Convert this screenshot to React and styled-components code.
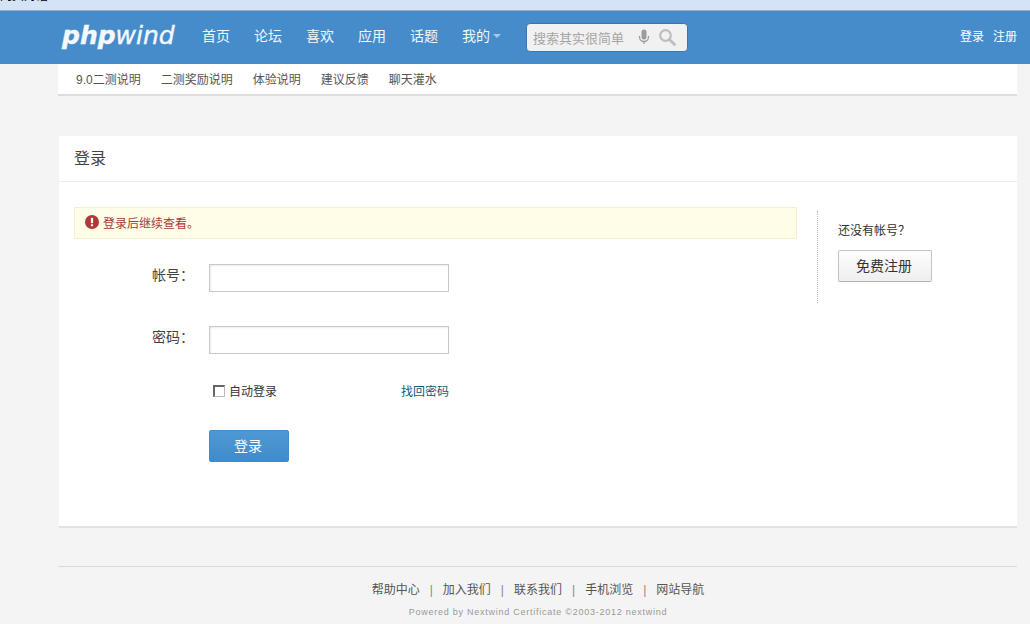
import React from "react"
import styled, { createGlobalStyle } from "styled-components"

const GlobalStyle = createGlobalStyle`
	html, body {
		margin: 0;
		padding: 0;
		background: #f4f4f4;
		font-family: "Liberation Sans", "Noto Sans CJK SC", sans-serif;
		font-size: 12px;
		color: #333;
	}
	* {
		box-sizing: border-box;
	}
`;

const Page = styled("div")`
	width: 1030px;
	height: 624px;
	overflow: hidden;
`;
const TopStrip = styled("div")`
	height: 11px;
	background: #d5e3f6;
	border-bottom: 1px solid #8fb0d3;
	overflow: hidden;
`;
const TopStripText = styled("div")`
	font-size: 12px;
	line-height: 12px;
	margin-top: -10px;
	color: #000;
`;
const Header = styled("header")`
	height: 53px;
	background: #468ccb;
	display: flex;
	align-items: center;
	padding: 0 13px 0 62px;
`;
const Logo = styled("div")`
	width: 140px;
	padding-bottom: 4px;
	font-family: "DejaVu Sans", sans-serif;
	font-size: 25px;
	font-style: italic;
	white-space: nowrap;
	color: #f4f8fc;
	-webkit-text-stroke: 0.4px #f4f8fc;
`;
const LogoStrong = styled("span")`
	font-weight: 700;
`;
const MainNav = styled("nav")`
	display: flex;
	gap: 24px;
	padding-bottom: 6px;
`;
const NavItem = styled("a")`
	display: flex;
	align-items: center;
	gap: 3px;
	font-size: 14px;
	color: #f2f7fb;
`;
const Caret = styled("span")`
	width: 0;
	height: 0;
	margin-top: 2px;
	border-left: 4px solid transparent;
	border-right: 4px solid transparent;
	border-top: 4px solid #a9cae6;
`;
const SearchBox = styled("div")`
	width: 162px;
	height: 29px;
	margin: 0 0 1px 25px;
	display: flex;
	align-items: center;
	padding: 0 11px 0 6px;
	background: #f1f1f1;
	border: 1px solid #3a76ac;
	border-radius: 4px;
`;
const SearchHint = styled("span")`
	flex: 1;
	font-size: 13px;
	color: #a5a5a5;
	white-space: nowrap;
`;
const SearchIcons = styled("div")`
	display: flex;
	align-items: center;
	gap: 8px;
	color: #bdbdbd;
`;
const UserNav = styled("div")`
	margin-left: auto;
	padding-bottom: 4px;
	display: flex;
	gap: 9px;
`;
const UserLink = styled("a")`
	font-size: 12px;
	color: #fff;
`;
const Container = styled("div")`
	width: 959px;
	margin-left: 58px;
`;
const SubNav = styled("div")`
	height: 32px;
	background: #fff;
	border-bottom: 2px solid #dedede;
	display: flex;
	align-items: center;
	gap: 20px;
	padding: 0 18px 2px;
`;
const SubNavItem = styled("a")`
	font-size: 12px;
	color: #555;
`;
const Panel = styled("section")`
	height: 392px;
	margin: 40px 0 0 1px;
	background: #fff;
	border-bottom: 2px solid #e2e2e2;
`;
const PanelTitle = styled("h2")`
	height: 46px;
	margin: 0;
	padding: 0 15px 4px;
	display: flex;
	align-items: center;
	border-bottom: 1px solid #ececec;
	font-size: 16px;
	font-weight: 400;
	color: #444;
`;
const PanelBody = styled("div")`
	display: flex;
	padding: 25px 0 0 15px;
`;
const LoginColumn = styled("div")`
	width: 723px;
`;
const Notice = styled("div")`
	height: 32px;
	display: flex;
	align-items: center;
	gap: 4px;
	padding: 0 0 2px 10px;
	background: #fffde8;
	border: 1px solid #f5eed2;
	font-size: 12px;
	color: #a93a3a;
`;
const Field = styled("div")`
	display: flex;
	align-items: flex-start;
	margin-top: ${(props) => props.$top}px;
`;
const FieldLabel = styled("label")`
	width: 135px;
	padding-right: 15px;
	text-align: right;
	font-size: 14px;
	line-height: 22px;
	color: #444;
`;
const TextInput = styled("input")`
	width: 240px;
	height: 28px;
	padding: 0 6px;
	background: #fff;
	border: 1px solid #c8c8c8;
	box-shadow: inset 1px 1px 2px rgba(0, 0, 0, 0.08);
	outline: none;
`;
const OptionsRow = styled("div")`
	width: 240px;
	margin: 28px 0 0 135px;
	display: flex;
	align-items: center;
	justify-content: space-between;
`;
const CheckLabel = styled("label")`
	display: flex;
	align-items: center;
	gap: 4px;
	padding-left: 4px;
	color: #333;
`;
const CheckBox = styled("span")`
	width: 12px;
	height: 12px;
	background: #fff;
	border: 2px solid #666;
	border-right: 1px solid #bbb;
	border-bottom: 1px solid #bbb;
`;
const ForgotLink = styled("a")`
	color: #14597f;
`;
const SubmitButton = styled("button")`
	display: block;
	width: 80px;
	height: 32px;
	margin: 31px 0 0 135px;
	padding: 0 2px 3px 0;
	background: linear-gradient(#4f98d5, #428bcb);
	border: 1px solid #428bcb;
	border-radius: 2px;
	font-family: inherit;
	font-size: 14px;
	color: #fff;
`;
const SideColumn = styled("aside")`
	width: 200px;
	height: 92px;
	margin: 4px 0 0 20px;
	padding: 10px 0 0 20px;
	border-left: 1px dotted #bbb;
`;
const SideText = styled("div")`
	font-size: 12px;
	color: #333;
`;
const RegisterButton = styled("button")`
	display: block;
	width: 94px;
	height: 32px;
	margin-top: 12px;
	padding: 0 2px 2px 0;
	background: linear-gradient(#fdfdfd, #eeeeee);
	border: 1px solid #c4c4c4;
	border-bottom-color: #b4b4b4;
	border-radius: 2px;
	font-family: inherit;
	font-size: 14px;
	color: #333;
`;
const Footer = styled("footer")`
	margin-top: 38px;
	border-top: 1px solid #d8d8d8;
	padding-top: 15px;
	text-align: center;
`;
const FooterLinks = styled("div")`
	display: flex;
	justify-content: center;
	gap: 10px;
	padding-left: 1px;
	font-size: 12px;
	line-height: 16px;
	color: #555;
`;
const FooterDivider = styled("span")`
	color: #888;
`;
const Copyright = styled("div")`
	margin-top: 9px;
	padding-left: 1px;
	font-size: 9px;
	letter-spacing: 0.75px;
	color: #999;
`;

const MicIcon = () => (
	<svg width="12" height="16" viewBox="0 0 12 16">
		<rect x="3.5" y="0.5" width="5" height="10" rx="2.5" fill="#9c9c9c" />
		<path d="M1.5 7v1a4.5 4.5 0 0 0 9 0V7M6 12.5V15" fill="none" stroke="#9c9c9c" strokeWidth="1.3" />
	</svg>
);
const SearchIcon = () => (
	<svg width="18" height="18" viewBox="0 0 18 18">
		<circle cx="7.5" cy="7.5" r="5.3" fill="none" stroke="currentColor" strokeWidth="2.2" />
		<path d="M11.5 11.5L16.5 16.5" stroke="currentColor" strokeWidth="2.8" strokeLinecap="round" />
	</svg>
);
const AlertIcon = () => (
	<svg width="14" height="14" viewBox="0 0 14 14">
		<circle cx="7" cy="7" r="7" fill="#b23838" />
		<rect x="5.9" y="2.8" width="2.2" height="5.4" rx="0.6" fill="#fff" />
		<rect x="5.9" y="9.2" width="2.2" height="2.1" rx="0.5" fill="#fff" />
	</svg>
);

const mainLinks = ["首页", "论坛", "喜欢", "应用", "话题"];
const subLinks = ["9.0二测说明", "二测奖励说明", "体验说明", "建议反馈", "聊天灌水"];
const footerLinks = ["帮助中心", "加入我们", "联系我们", "手机浏览", "网站导航"];

const App = () => {
	return (
		<Page>
			<GlobalStyle />
			<TopStrip>
				<TopStripText>网页对话</TopStripText>
			</TopStrip>
			<Header>
				<Logo><LogoStrong>php</LogoStrong>wind</Logo>
				<MainNav>
					{mainLinks.map((link) => (
						<NavItem key={link}>{link}</NavItem>
					))}
					<NavItem>我的<Caret /></NavItem>
				</MainNav>
				<SearchBox>
					<SearchHint>搜索其实很简单</SearchHint>
					<SearchIcons>
						<MicIcon />
						<SearchIcon />
					</SearchIcons>
				</SearchBox>
				<UserNav>
					<UserLink>登录</UserLink>
					<UserLink>注册</UserLink>
				</UserNav>
			</Header>
			<Container>
				<SubNav>
					{subLinks.map((link) => (
						<SubNavItem key={link}>{link}</SubNavItem>
					))}
				</SubNav>
				<Panel>
					<PanelTitle>登录</PanelTitle>
					<PanelBody>
						<LoginColumn>
							<Notice><AlertIcon />登录后继续查看。</Notice>
							<Field $top={25}>
								<FieldLabel>帐号：</FieldLabel>
								<TextInput type="text" />
							</Field>
							<Field $top={34}>
								<FieldLabel>密码：</FieldLabel>
								<TextInput type="password" />
							</Field>
							<OptionsRow>
								<CheckLabel><CheckBox />自动登录</CheckLabel>
								<ForgotLink>找回密码</ForgotLink>
							</OptionsRow>
							<SubmitButton>登录</SubmitButton>
						</LoginColumn>
						<SideColumn>
							<SideText>还没有帐号？</SideText>
							<RegisterButton>免费注册</RegisterButton>
						</SideColumn>
					</PanelBody>
				</Panel>
				<Footer>
					<FooterLinks>
						{footerLinks.map((link, index) => (
							<React.Fragment key={link}>
								{index > 0 && <FooterDivider>|</FooterDivider>}
								<span>{link}</span>
							</React.Fragment>
						))}
					</FooterLinks>
					<Copyright>Powered by Nextwind Certificate ©2003-2012 nextwind</Copyright>
				</Footer>
			</Container>
		</Page>
	)
};

export default App
